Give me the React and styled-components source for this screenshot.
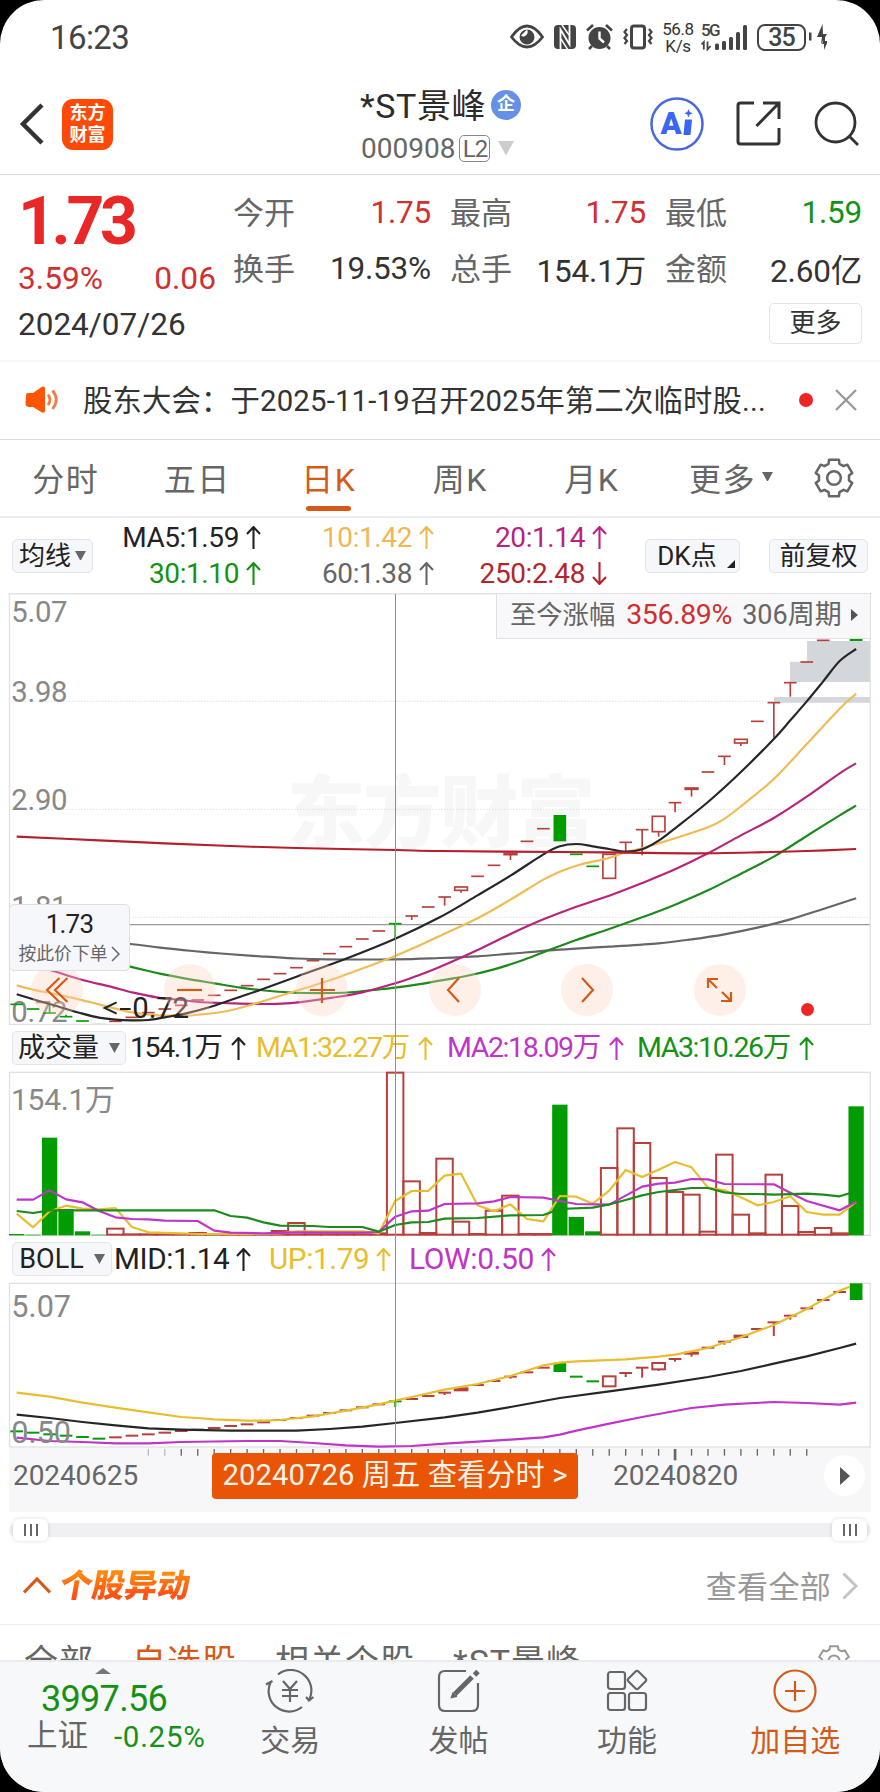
import React from "react";
import styled, { createGlobalStyle } from "styled-components";

const RED = "#d0302f";
const GREEN = "#159215";
const ORANGE = "#d65a17";
const CANDLE_RED = "#b8403c";
const CANDLE_GREEN = "#009c00";

// charts use 3 units for one pixel, a day is 49.38 units wide
const dayX = (i) => 50 + i * 49.38;

const kline = [
  { c: "g", y: 1243 }, { c: "g", y: 1257 }, { c: "g", y: 1269, from: 1245 }, { c: "g", y: 1280, from: 1274 },
  { c: "g", y: 1293 }, { c: "g", y: 1304 }, { y: 1294 }, { y: 1282 }, { y: 1268 }, { y: 1257 }, { y: 1246 },
  { y: 1230 }, { y: 1216 }, { y: 1201 }, { y: 1187 }, { y: 1168 }, { y: 1151 }, { y: 1133 }, { y: 1112 },
  { y: 1091 }, { y: 1070 }, { y: 1047 }, { y: 1023 }, { c: "g", y: 1001, to: 1045 }, { y: 978, to: 990 },
  { y: 951 }, { y: 921, to: 947 }, { y: 891, box: 901, to: 908 }, { y: 859 }, { y: 826 },
  { y: 790, box: 794, to: 810 }, { y: 754 }, { y: 716 }, { c: "g", y: 675, box: 754 }, { c: "g", y: 793 },
  { c: "g", y: 829 }, { y: 793, box: 865 }, { y: 757, to: 790 }, { y: 719, to: 796 },
  { y: 679, box: 725, to: 740 }, { y: 638, to: 667 }, { y: 594, box: 598, to: 620 }, { y: 546 },
  { y: 499, to: 525 }, { y: 448, box: 459, to: 468 }, { y: 394 }, { y: 338, to: 443 }, { y: 278, to: 320 },
  { y: 216 }, { y: 151 }, null, { c: "g", y: 145, box: 153 },
];

const klineLines = [
  { color: "#666", pts: [[0, 1025], [3, 1045], [6.9, 1062], [8.7, 1073], [10.7, 1083], [12.8, 1092], [14.8, 1099], [16.8, 1105], [18.8, 1108], [23, 1108], [25.7, 1104], [28, 1099], [30, 1091], [33, 1079], [36, 1070], [39, 1060], [41, 1048], [43, 1033], [45, 1013], [47, 988], [49, 957], [51, 925]] },
  { color: "#1c8a1c", pts: [[0, 1040], [3, 1085], [6.9, 1130], [8.7, 1151], [10.3, 1166], [12, 1180], [13.6, 1193], [14.8, 1200], [16.2, 1206], [17.6, 1209], [19.2, 1209], [20.5, 1206], [21.9, 1199], [23, 1193], [24.3, 1184], [25.7, 1172], [27.3, 1158], [29, 1138], [30.6, 1113], [32.2, 1083], [34, 1050], [36, 1017], [38, 982], [40, 944], [42, 901], [44, 851], [46, 800], [48, 738], [50, 676], [51, 647]] },
  { color: "#b8237c", pts: [[0, 1100], [2.3, 1144], [4, 1170], [5.7, 1190], [7.1, 1208], [8.5, 1222], [10, 1230], [11.1, 1236], [13.2, 1240], [15.2, 1242], [16.4, 1240], [17.6, 1234], [19.2, 1223], [21, 1207], [23, 1180], [24.3, 1158], [25.7, 1131], [28, 1080], [30, 1032], [32, 988], [34, 950], [36, 917], [38, 879], [40, 838], [42, 790], [44, 736], [46, 684], [48, 620], [50, 550], [51, 520]] },
  { color: "#f0bb52", pts: [[0, 1186], [1, 1199], [3, 1219], [5, 1243], [6, 1256], [7, 1267], [8.1, 1274], [9.1, 1277], [10.3, 1277], [11.5, 1272], [12.8, 1263], [14, 1248], [15.2, 1230], [16.4, 1211], [17.8, 1190], [19.2, 1168], [21.3, 1130], [23, 1098], [24.3, 1070], [25.7, 1038], [28, 985], [30, 929], [32, 869], [33, 845], [34, 827], [35, 815], [36, 804], [37, 787], [38, 775], [39, 760], [40, 745], [42, 712], [43, 686], [44, 649], [46, 567], [48, 462], [50, 356], [51, 311]] },
  { color: "#262626", pts: [[0, 1213], [2, 1242], [4, 1271], [5, 1283], [6, 1289], [7, 1291], [8, 1290], [9, 1282], [10.3, 1270], [12, 1247], [13.6, 1220], [15, 1196], [17, 1160], [20, 1106], [23, 1046], [25.7, 982], [28, 916], [30, 857], [32, 793], [33, 769], [34, 762], [35, 769], [36, 777], [37, 785], [38, 778], [39, 752], [40, 715], [42, 636], [44, 546], [46, 447], [47, 391], [48, 334], [49, 274], [50, 213], [51, 177]] },
  { color: "#b41f2b", pts: [[0, 740], [5, 751], [9, 760], [13, 768], [17, 774], [23, 780], [25.7, 783], [33, 786], [37, 788], [41, 790], [45, 787], [48, 783], [51, 777]] },
];

const volume = [
  642, 644, 353, 567, 634, 644, 626, 643, 643, 643, 643, 639, 643, 643, 643, 643, 633, 609, 643, 643, 643, 643, 640,
  158, 484, 639, 416, 605, 642, 572, 527, 642, 642, 254, 591, 634, 444, 325, 369, 474, 516, 524, 635, 404, 584, 640,
  464, 558, 636, 624, 640, 259,
];
const fallingDays = [0, 1, 2, 3, 4, 5, 33, 34, 35, 51];

const volumeLines = [
  { color: "#e8bd2e", pts: [[0, 581], [1, 622], [2, 574], [3, 557], [4, 566], [5, 568], [6, 564], [7, 621], [8, 637], [10, 640], [11, 642], [15, 642], [16, 640], [17, 634], [21, 634], [22, 640], [23, 543], [24, 513], [25, 513], [26, 467], [27, 461], [28, 556], [29, 574], [30, 553], [31, 597], [32, 604], [33, 528], [34, 530], [35, 551], [36, 512], [37, 450], [38, 471], [39, 449], [40, 426], [41, 442], [42, 503], [43, 511], [44, 532], [45, 556], [46, 546], [47, 529], [48, 576], [49, 584], [50, 584], [51, 546]] },
  { color: "#c034c8", pts: [[0, 539], [1, 539], [2, 511], [3, 538], [4, 547], [5, 573], [6, 592], [7, 597], [8, 598], [9, 602], [11, 603], [12, 632], [13, 638], [15, 640], [17, 637], [21, 638], [22, 636], [23, 590], [24, 574], [25, 572], [26, 552], [28, 550], [29, 544], [30, 531], [32, 533], [33, 543], [34, 552], [36, 554], [37, 527], [38, 500], [39, 491], [40, 488], [41, 477], [42, 478], [43, 492], [46, 493], [47, 518], [48, 543], [50, 571], [51, 545]] },
  { color: "#1c8a1c", pts: [[0, 573], [1, 579], [2, 571], [12, 571], [13, 588], [14, 593], [15, 607], [16, 617], [18, 618], [19, 621], [21, 621], [22, 635], [23, 615], [24, 607], [25, 606], [26, 596], [28, 594], [30, 586], [32, 585], [33, 567], [35, 563], [36, 553], [37, 540], [38, 526], [39, 516], [40, 510], [41, 504], [42, 504], [43, 517], [44, 522], [45, 522], [46, 524], [48, 521], [49, 524], [50, 529], [51, 514]] },
];

const boll = [
  { c: "g", y: 514 }, { c: "g", y: 518 }, { c: "g", y: 523 }, { c: "g", y: 527 }, { c: "g", y: 531 },
  { c: "g", y: 536 }, { y: 532 }, { y: 527 }, { y: 523 }, { y: 518 }, { y: 513 }, { y: 509 }, { y: 504 },
  { y: 498 }, { y: 493 }, { y: 487 }, { y: 480 }, { y: 474 }, { y: 467 }, { y: 459 }, { y: 451 }, { y: 442 },
  { y: 433 }, { c: "g", y: 424, to: 441 }, { y: 417 }, { y: 408 }, { y: 398, to: 405 }, { y: 385, box: 391 },
  { y: 375 }, { y: 363 }, { y: 350, to: 356 }, { y: 337 }, { y: 323 }, { c: "g", y: 308, box: 336 },
  { c: "g", y: 350 }, { c: "g", y: 364 }, { y: 349, box: 379 }, { y: 339, to: 351 }, { y: 323, to: 353 },
  { y: 309, box: 328, to: 333 }, { y: 297, to: 305 }, { y: 278, box: 281, to: 290 }, { y: 263 },
  { y: 245, to: 254 }, { y: 227, box: 231 }, { y: 207 }, { y: 187, to: 228 }, { y: 167, to: 179 }, { y: 145 },
  { y: 120 }, { y: 96 }, { c: "g", y: 70, box: 120 },
];

const bollLines = [
  { color: "#c034c8", pts: [[0, 533], [2, 543], [4, 546], [6, 550], [8, 550], [10, 546], [14, 543], [16, 543], [18, 549], [20, 556], [22, 560], [24, 558], [26, 551], [28, 545], [30, 539], [32, 532], [33, 524], [34, 512], [36, 491], [38, 471], [40, 453], [41, 444], [43, 434], [46, 426], [48, 429], [50, 434], [51, 428]] },
  { color: "#262626", pts: [[0, 464], [2, 474], [4, 486], [6, 496], [8, 505], [10, 509], [13, 512], [17, 512], [19, 507], [21, 500], [23, 489], [26, 472], [28, 458], [30, 441], [33, 414], [36, 394], [39, 374], [42, 351], [44, 333], [46, 311], [48, 289], [50, 264], [51, 251]] },
  { color: "#e8bd2e", pts: [[0, 398], [2, 410], [4, 428], [6, 443], [8, 457], [10, 471], [11, 474], [12, 478], [14, 482], [15, 482], [16, 480], [18, 469], [20, 452], [22, 433], [23, 422], [24, 411], [26, 389], [28, 372], [30, 348], [32, 316], [33, 308], [34, 304], [37, 298], [39, 290], [40, 284], [42, 264], [44, 232], [46, 195], [48, 147], [50, 92], [50.6, 80]] },
];

const smooth = (pts) => {
  const p = pts.map(([i, y]) => [dayX(i), y]);
  return p.reduce((d, [x, y], i) => {
    if (i === 0) return `M${x} ${y}`;
    const a = p[i - 2] || p[i - 1];
    const b = p[i - 1];
    const n = p[i + 1] || p[i];
    return `${d}C${b[0] + (x - a[0]) / 6} ${b[1] + (y - a[1]) / 6} ${x - (n[0] - b[0]) / 6} ${y - (n[1] - b[1]) / 6} ${x} ${y}`;
  }, "");
};

const straight = (pts) => pts.map(([i, y], n) => `${n ? "L" : "M"}${dayX(i)} ${y}`).join("");

const Lines = ({ lines, path }) =>
  lines.map(({ color, pts }) => (
    <path key={color} d={path(pts)} fill="none" stroke={color} strokeWidth="6.5" strokeLinejoin="round" />
  ));

const Candles = ({ data, width = 5 }) =>
  data.map((d, i) => {
    if (!d) return null;
    const x = dayX(i);
    const color = d.c === "g" ? CANDLE_GREEN : CANDLE_RED;
    return (
      <g key={i} stroke={color} strokeWidth={width} fill="none">
        {d.box ? (
          <rect
            x={x - 19}
            y={d.y}
            width="38"
            height={d.box - d.y}
            fill={d.c === "g" ? color : "none"}
            strokeWidth={d.c === "g" ? 0 : width}
          />
        ) : (
          <path d={`M${x - 19} ${d.y}h38`} />
        )}
        {d.to && <path d={`M${x} ${d.box || d.y}V${d.to}`} />}
        {d.from && <path d={`M${x} ${d.from}V${d.y}`} />}
      </g>
    );
  });

const KlineChart = () => (
  <ChartSvg $h={432} viewBox="0 9 2640 1296">
    <text x="860" y="752" textLength="925" fontSize="235" fontWeight="900" fill="#f7f7f7">东方财富</text>
    <g stroke="#d2d2d2" strokeWidth="3" strokeDasharray="3 6">
      <path d="M28 334H2611M28 658H2611M28 982H2611" />
    </g>
    <g fill="#d3d6db">
      <path d="M2322 321H2611V338H2322ZM2370 215H2611V276H2370ZM2421 153H2611V216H2421Z" />
    </g>
    <g fill="#888" fontSize="88" letterSpacing="-1">
      <text x="34" y="96">5.07</text>
      <text x="34" y="336">3.98</text>
      <text x="34" y="659">2.90</text>
      <text x="34" y="982">1.81</text>
      <text x="34" y="1297">0.72</text>
    </g>
    <path d="M28 1004H2611" stroke="#999" strokeWidth="4" />
    <Candles data={kline} />
    <Lines lines={klineLines} path={smooth} />
    <path d="M350 1237l-36 17l36 17M360 1257h32" fill="none" stroke="#222" strokeWidth="6" />
    <text x="397" y="1284" fontSize="88" fill="#222" textLength="170">0.72</text>
    <rect x="28.500" y="11.500" width="2582" height="1292" fill="none" stroke="#e0e0e0" strokeWidth="4" />
  </ChartSvg>
);

const VolumeChart = () => (
  <ChartSvg $h={166} viewBox="0 153 2640 498">
    <rect x="28.500" y="157" width="2582" height="489" fill="none" stroke="#e0e0e0" strokeWidth="4" />
    <text x="33" y="269" fontSize="90" fill="#888" textLength="312">154.1万</text>
    {volume.map((y, i) =>
      fallingDays.includes(i) ? (
        <rect key={i} x={dayX(i) - 23} y={y} width="46" height={646 - y} fill={CANDLE_GREEN} />
      ) : (
        <rect key={i} x={dayX(i) - 25} y={y} width="49.400" height={644 - y} fill="none" stroke={CANDLE_RED} strokeWidth="6" />
      )
    )}
    <Lines lines={volumeLines} path={straight} />
  </ChartSvg>
);

const BollChart = () => (
  <ChartSvg $h={167} viewBox="0 63 2640 501">
    <rect x="28.500" y="70" width="2582" height="491" fill="none" stroke="#e0e0e0" strokeWidth="4" />
    <Candles data={boll} width={6} />
    <Lines lines={bollLines} path={straight} />
    <g fill="#888" fontSize="92">
      <text x="34" y="170">5.07</text>
      <text x="34" y="550">0.50</text>
    </g>
  </ChartSvg>
);

const Ticks = () => (
  <TickSvg viewBox="0 564 2640 192">
    {Array.from({ length: 41 }, (_, n) => n + 8).map((i) => (
      <path
        key={i}
        d={`M${dayX(i)} 567v${i === 40 ? 34 : 20}`}
        stroke={i < 10 ? "#bbb" : "#666"}
        strokeWidth={i === 40 ? 8 : 4}
      />
    ))}
  </TickSvg>
);

const Arrow = ({ down }) => (
  <svg width="15" height="23" viewBox="0 0 15 23" fill="none" stroke="currentColor" strokeWidth="2.1">
    <path d={down ? "M7.500 0V22M1 15l6.500 7L14 15" : "M7.500 23V1M1 8L7.500 1L14 8"} />
  </svg>
);

const Triangle = ({ size = 11, color = "#666" }) => (
  <svg width={size} height={size * 0.9} viewBox="0 0 10 9">
    <path d="M0 0h10L5 9Z" fill={color} />
  </svg>
);

const gearPath = Array.from({ length: 6 }, (_, k) =>
  [[-15, 18], [15, 18], [21, 14.5], [39, 14.5]].map(([a, r]) => {
    const t = ((k * 60 + a - 90) * Math.PI) / 180;
    return `${(20 + r * Math.cos(t)).toFixed(1)} ${(20 + r * Math.sin(t)).toFixed(1)}`;
  })
)
  .flat()
  .join("L");

const Gear = ({ size, color, width = 2.4 }) => (
  <svg width={size} height={size} viewBox="0 0 40 40" fill="none" stroke={color} strokeWidth={width} strokeLinejoin="round">
    <path d={`M${gearPath}Z`} />
    <circle cx="20" cy="20" r="6.500" />
  </svg>
);

const StatusIcons = () => (
  <>
    <svg width="34" height="26" viewBox="0 0 34 26">
      <path d="M1.500 13Q9 2 17 2T32.500 13Q25 23 17 23T1.500 13Z" fill="none" stroke="#444" strokeWidth="2.800" />
      <path d="M17 5.500a7.500 7.500 0 1 0 7.500 7.500a7.500 7.500 0 0 0-7.500-7.500c1.500 3 .500 5-2 6.500c-1.500 1-3 .500-4-.500" fill="#444" />
    </svg>
    <svg width="24" height="26" viewBox="0 0 24 26">
      <rect x="1" y="1" width="22" height="24" rx="4" fill="#444" />
      <path d="M7.500 26V5.500L16.500 20.500V0" fill="none" stroke="#fff" strokeWidth="1.800" />
      <path d="M9 1L16 11M8 15L15 26" fill="none" stroke="#fff" strokeWidth="1.400" />
    </svg>
    <svg width="27" height="26" viewBox="0 0 27 26">
      <circle cx="13.500" cy="14" r="11" fill="#444" />
      <path d="M1 6.500L7 1M26 6.500L20 1M6 22l-3 3M21 22l3 3" stroke="#444" strokeWidth="2.600" />
      <path d="M13.500 7.500V14.500L18 18.500" fill="none" stroke="#fff" strokeWidth="2.400" />
    </svg>
    <svg width="32" height="26" viewBox="0 0 32 26" fill="none" stroke="#444">
      <rect x="9.500" y="2" width="13" height="22" rx="2.500" strokeWidth="3" />
      <path d="M5 5L2.500 8L5 11L2.500 14L5 17L2.500 20M27 5L29.500 8L27 11L29.500 14L27 17L29.500 20" strokeWidth="2.200" />
    </svg>
  </>
);

const Signal = () => (
  <svg width="47" height="28" viewBox="0 0 47 28" fill="#444">
    <path d="M2.800 26.500V19L.500 21.500M6.500 18.500V26.500L9.500 23" stroke="#444" strokeWidth="1.800" fill="none" />
    <rect x="14" y="20.500" width="4" height="6.500" rx="1.500" />
    <rect x="21" y="18" width="4" height="9" rx="1.500" />
    <rect x="28" y="14" width="4" height="13" rx="1.500" />
    <rect x="35" y="9" width="4" height="18" rx="1.500" />
    <rect x="42" y="2" width="4" height="25" rx="1.500" />
  </svg>
);

const quotes = [
  ["今开", "1.75", RED], ["最高", "1.75", RED], ["最低", "1.59", GREEN],
  ["换手", "19.53%"], ["总手", "154.1万"], ["金额", "2.60亿"],
];

const averages = [
  ["MA5:1.59", "#222"], ["10:1.42", "#f0b755"], ["20:1.14", "#b9227f"],
  ["30:1.10", GREEN], ["60:1.38", "#666"], ["250:2.48", "#b3252c", true],
];

const tools = [
  <path key="a" d="M15.500 1L3 13l12.500 12M23.500 1L11 13l12.500 12" />,
  <path key="b" d="M1 13h25" />,
  <path key="c" d="M13 1v25M1 13h25" />,
  <path key="d" d="M18 1L7 13l11 12" />,
  <path key="e" d="M8 1L19 13L8 25" />,
  <path key="f" d="M2 11V2H12M2 2L11 11M25 15V24H15M25 24L16 15" />,
];

const App = () => (
  <>
    <GlobalStyle />
    <Screen>
      <StatusBar>
        <Clock>16:23</Clock>
        <StatusIcons />
        <Speed><span>56.8</span><span>K/s</span></Speed>
        <SignalBox><i>5G</i><Signal /></SignalBox>
        <Battery>35</Battery>
        <svg width="18" height="28" viewBox="0 0 18 28" fill="#444">
          <path d="M0 9.500h2.500v8H0ZM13.500 1L8 14h5l-1 7L18 11h-4ZM16 13l-3 8h2l0 6l4-9h-3Z" />
        </svg>
      </StatusBar>

      <Header>
        <svg width="26" height="44" viewBox="0 0 26 44" fill="none" stroke="#333" strokeWidth="4.500">
          <path d="M23 3L4 22L23 41" />
        </svg>
        <Logo>东方<br />财富</Logo>
        <Title>
          <TitleRow><Name>*ST景峰</Name><Badge>企</Badge></TitleRow>
          <CodeRow>000908<Level>L2</Level><Triangle size={16} color="#ccc" /></CodeRow>
        </Title>
        <svg width="54" height="54" viewBox="0 0 54 54">
          <circle cx="27" cy="27" r="25.500" fill="none" stroke="#4668e0" strokeWidth="2.500" />
          <text x="10.500" y="37" fontSize="31" fontWeight="900" fill="#3a66f5">A</text>
          <path d="M35 22.500h7L40.500 38h-7ZM38.500 12l1.200 3l3 1.200l-3 1.200l-1.200 3l-1.200-3l-3-1.200l3-1.200Z" fill="#3a66f5" />
        </svg>
        <svg width="46" height="46" viewBox="0 0 46 46" fill="none" stroke="#333" strokeWidth="3">
          <path d="M18 2H4.500Q2 2 2 4.500V40.500Q2 43 4.500 43H40.500Q43 43 43 40.500V27M27 2H43V18M43 2L20.500 25" />
        </svg>
        <svg width="46" height="46" viewBox="0 0 46 46" fill="none" stroke="#333" strokeWidth="2.800">
          <circle cx="21.500" cy="21.500" r="19.500" />
          <path d="M35 35L44 44" />
        </svg>
      </Header>

      <Quote>
        <PriceBox>
          <Price>1.73</Price>
          <Change><span>3.59%</span><span>0.06</span></Change>
          <QuoteDate>2024/07/26</QuoteDate>
        </PriceBox>
        <QuoteSide>
          <QuoteGrid>
            {quotes.map(([label, value, color]) => (
              <QuoteCell key={label} $color={color}>
                <span>{label}</span>
                <b>{value}</b>
              </QuoteCell>
            ))}
          </QuoteGrid>
          <MoreButton>更多</MoreButton>
        </QuoteSide>
      </Quote>

      <Notice>
        <svg width="34" height="28" viewBox="0 0 34 28">
          <path d="M1 9Q1 7 3 7H8L17 .800Q19.500 0 20 2V25Q19.500 27.500 17 26.500L8 21H3Q.500 20 .500 18Z" fill="#ff5505" />
          <path d="M23 8.500Q27 13.500 23 19M27.500 4.500Q35 13.500 27.500 23" fill="none" stroke="#f37b45" strokeWidth="2.800" />
        </svg>
        <NoticeText>股东大会：于2025-11-19召开2025年第二次临时股...</NoticeText>
        <RedDot />
        <svg width="22" height="22" viewBox="0 0 22 22" stroke="#999" strokeWidth="2.400">
          <path d="M1 1L21 21M21 1L1 21" />
        </svg>
      </Notice>

      <Tabs>
        {["分时", "五日", "日K", "周K", "月K"].map((t) => (
          <Tab key={t} $active={t === "日K"}>{t}</Tab>
        ))}
        <Tab>更多<Triangle /></Tab>
        <Gear size={42} color="#666" />
      </Tabs>

      <ChartArea>
        <AverageBar>
          <Chip $w={81}>均线<Triangle size={11} /></Chip>
          <AverageGrid>
            {averages.map(([text, color, down]) => (
              <Legend key={text} $color={color} $size={28}>{text}<Arrow down={down} /></Legend>
            ))}
          </AverageGrid>
          <Chip $w={95} $corner>DK点</Chip>
          <Chip $w={99}>前复权</Chip>
        </AverageBar>

        <Plot>
          <KlineChart />
          <RiseTip>
            至今涨幅<em>356.89%</em><span>306周期</span>
            <svg width="7" height="12" viewBox="0 0 7 12"><path d="M0 0L7 6L0 12Z" fill="#555" /></svg>
          </RiseTip>
          <ToolRow>
            {tools.map((icon) => (
              <Tool key={icon.key}>
                <svg width="27" height="27" viewBox="0 0 27 27" fill="none" stroke={ORANGE} strokeWidth="2.200">{icon}</svg>
              </Tool>
            ))}
          </ToolRow>
          <OrderTip>
            <b>1.73</b>
            <span>
              按此价下单
              <svg width="9" height="16" viewBox="0 0 9 16" fill="none" stroke="#666" strokeWidth="1.500"><path d="M1 1L8 8L1 15" /></svg>
            </span>
          </OrderTip>
          <PlotDot />
        </Plot>

        <VolumeBar>
          <Chip $w={114} $gap={10} $size={27}>成交量<Triangle size={11} /></Chip>
          <Legend $color="#222" $tight>154.1万<Arrow /></Legend>
          <Legend $color="#e8bd2e" $tight>MA1:32.27万<Arrow /></Legend>
          <Legend $color="#c034c8" $tight>MA2:18.09万<Arrow /></Legend>
          <Legend $color={GREEN} $tight>MA3:10.26万<Arrow /></Legend>
        </VolumeBar>
        <VolumeChart />

        <BollBar>
          <Chip $w={100} $gap={10} $size={27}>BOLL<Triangle size={11} /></Chip>
          <Legend $color="#222" $size={29.7}>MID:1.14<Arrow /></Legend>
          <Legend $color="#e8bd2e" $size={29.7}>UP:1.79<Arrow /></Legend>
          <Legend $color="#c034c8" $size={30}>LOW:0.50<Arrow /></Legend>
        </BollBar>
        <BollChart />
        <Crosshair />
      </ChartArea>

      <Axis>
        <Ticks />
        <AxisDate>20240625</AxisDate>
        <DayButton>20240726 周五 查看分时 &gt;</DayButton>
        <AxisDate>20240820</AxisDate>
        <PlayButton>
          <svg width="10" height="18" viewBox="0 0 10 18"><path d="M0 0L10 9L0 18Z" fill="#555" /></svg>
        </PlayButton>
      </Axis>

      <Slider>
        <Handle><i /><i /><i /></Handle>
        <Handle><i /><i /><i /></Handle>
      </Slider>

      <SectionHead>
        <svg width="28" height="17" viewBox="0 0 28 17" fill="none" stroke={ORANGE} strokeWidth="3.200"><path d="M1 15.500L14 2L27 15.500" /></svg>
        <SectionTitle>个股异动</SectionTitle>
        <ViewAll>查看全部</ViewAll>
        <svg width="16" height="28" viewBox="0 0 16 28" fill="none" stroke="#c4c4c4" strokeWidth="3"><path d="M1.500 1.500L14 14L1.500 26.500" /></svg>
      </SectionHead>
      <NewsTabs>
        <span>全部</span>
        <NewsActive>自选股</NewsActive>
        <span>相关个股</span>
        <span>*ST景峰</span>
        <Gear size={34} color="#999" />
      </NewsTabs>

      <BottomBar>
        <IndexBox>
          <svg width="16" height="6" viewBox="0 0 16 6"><path d="M0 6L8 0L16 6Z" fill="#777" /></svg>
          <b>3997.56</b>
          <div><span>上证</span><em>-0.25%</em></div>
        </IndexBox>
        <BottomItem>
          <svg width="50" height="44" viewBox="0 0 50 44" fill="none" stroke="#666" strokeWidth="2.200">
            <path d="M13 5.500A20.500 20.500 0 0 1 44.500 30M41 28L44 31.500L48.500 28M37 38A20.500 20.500 0 0 1 5.500 13.500M1 15.500L7.500 12" />
            <path d="M18 12L25 20L32 12M25 20V33M17 21H33M17 27H33" />
          </svg>
          交易
        </BottomItem>
        <BottomItem>
          <svg width="44" height="44" viewBox="0 0 44 44" fill="none" stroke="#666" strokeWidth="2.200">
            <path d="M29 2H8Q2 2 2 8V36Q2 42 8 42H35Q41 42 41 36V14" />
            <path d="M35 8L18 25" strokeWidth="5" />
            <path d="M37.500 6L41 2.500" strokeWidth="5" />
            <path d="M20 27L15 28L16.500 23.500" fill="#666" />
          </svg>
          发帖
        </BottomItem>
        <BottomItem>
          <svg width="42" height="44" viewBox="0 0 42 44" fill="none" stroke="#666" strokeWidth="2.200">
            <rect x="2" y="3" width="17" height="17" rx="2.500" />
            <rect x="2" y="24" width="17" height="17" rx="2.500" />
            <rect x="23" y="24" width="17" height="17" rx="2.500" />
            <rect x="24" y="4" width="14" height="14" rx="2" transform="rotate(45 31 11)" />
          </svg>
          功能
        </BottomItem>
        <BottomItem $active>
          <svg width="44" height="44" viewBox="0 0 44 44" fill="none" stroke={ORANGE} strokeWidth="2.200">
            <circle cx="22" cy="22" r="20.500" />
            <path d="M22 12V32M12 22H32" />
          </svg>
          加自选
        </BottomItem>
      </BottomBar>
    </Screen>
  </>
);

const GlobalStyle = createGlobalStyle`
  * {
    box-sizing: border-box;
  }
  body {
    margin: 0;
    background: #000;
    font-family: Roboto, "Noto Sans CJK SC", sans-serif;
  }
  svg {
    display: block;
    flex-shrink: 0;
  }
  i, em {
    font-style: normal;
  }
  b {
    font-weight: 400;
  }
`;

const Screen = styled.div`
  width: 880px;
  height: 1792px;
  display: flex;
  flex-direction: column;
  background: #fff;
  border-radius: 44px;
  overflow: hidden;
  white-space: nowrap;
  & > * {
    flex-shrink: 0;
  }
`;

const StatusBar = styled.div`
  height: 74px;
  padding-left: 50px;
  display: flex;
  align-items: center;
  gap: 9px;
`;

const Clock = styled.div`
  width: 451px;
  font-size: 33px;
  letter-spacing: -0.6px;
  color: #444;
`;

const Speed = styled.div`
  width: 32px;
  margin-left: -1px;
  padding-top: 1px;
  display: flex;
  flex-direction: column;
  align-items: center;
  font-size: 17px;
  line-height: 16.5px;
  letter-spacing: -0.4px;
  color: #333;
`;

const SignalBox = styled.div`
  position: relative;
  margin-left: -2px;
  i {
    position: absolute;
    left: 0;
    top: -2px;
    font-size: 17px;
    line-height: 18px;
    font-weight: 500;
    letter-spacing: -1.6px;
    color: #444;
  }
`;

const Battery = styled.div`
  width: 49px;
  height: 27px;
  border: 2px solid #444;
  border-radius: 8px;
  text-align: center;
  font-size: 25px;
  line-height: 24px;
  letter-spacing: -1px;
  font-weight: 500;
  color: #444;
  & + svg {
    margin-left: -6px;
  }
`;

const Header = styled.div`
  height: 101px;
  padding-left: 19px;
  display: flex;
  align-items: center;
  border-bottom: 1px solid #dcdedd;
  & > svg:nth-of-type(2) {
    margin-left: 109px;
  }
  & > svg:nth-of-type(3) {
    margin-left: 32px;
  }
  & > svg:nth-of-type(4) {
    margin-left: 32px;
  }
`;

const Logo = styled.div`
  width: 51px;
  height: 51px;
  margin-left: 17px;
  padding-top: 3px;
  border-radius: 11px;
  background: #ff4a05;
  color: #fff;
  text-align: center;
  font-size: 18px;
  line-height: 22px;
  font-weight: 700;
`;

const Title = styled.div`
  width: 180px;
  margin-left: 248px;
  padding-top: 6px;
`;

const TitleRow = styled.div`
  height: 40px;
  display: flex;
  align-items: center;
  gap: 6px;
`;

const Name = styled.div`
  width: 125px;
  font-size: 34px;
  letter-spacing: 0.6px;
  margin: -3px 0 0 -1px;
  color: #2b2b2b;
`;

const Badge = styled.div`
  width: 30px;
  height: 30px;
  border-radius: 50%;
  background: #6590e5;
  color: #fff;
  font-size: 18px;
  line-height: 28px;
  font-weight: 700;
  text-align: center;
`;

const CodeRow = styled.div`
  height: 42px;
  margin-top: 3px;
  display: flex;
  align-items: center;
  font-size: 28px;
  color: #666;
  svg {
    margin-left: 8px;
  }
`;

const Level = styled.div`
  width: 31px;
  height: 27px;
  margin-left: 4px;
  border: 1px solid #888;
  border-radius: 5px;
  font-size: 24px;
  line-height: 26px;
  letter-spacing: -1px;
  text-align: center;
`;

const Quote = styled.div`
  height: 187px;
  display: flex;
  border-bottom: 2px solid #f6f6f6;
`;

const PriceBox = styled.div`
  width: 216px;
  padding-left: 18px;
`;

const Price = styled.div`
  height: 81px;
  padding-top: 7px;
  font-size: 66px;
  line-height: 80px;
  font-weight: 700;
  letter-spacing: -4.3px;
  color: #ea2727;
`;

const Change = styled.div`
  display: flex;
  justify-content: space-between;
  font-size: 31.7px;
  line-height: 45px;
  color: ${RED};
`;

const QuoteDate = styled.div`
  font-size: 31.5px;
  line-height: 48px;
  color: #333;
`;

const QuoteSide = styled.div`
  margin-left: 17px;
  width: 629px;
`;

const QuoteGrid = styled.div`
  padding-top: 9px;
  display: grid;
  grid-template-columns: 198px 196px 197px;
  column-gap: 19px;
`;

const QuoteCell = styled.div`
  height: 56px;
  display: flex;
  justify-content: space-between;
  align-items: center;
  font-size: 31px;
  color: #666;
  span {
    padding-bottom: 3px;
  }
  b {
    font-size: 31.5px;
    letter-spacing: -0.2px;
    color: ${(p) => p.$color || "#333"};
  }
`;

const MoreButton = styled.div`
  width: 93px;
  height: 41px;
  margin: 7px 0 0 auto;
  border: 1px solid #e4e4e4;
  border-radius: 5px;
  text-align: center;
  font-size: 26px;
  line-height: 38px;
  color: #333;
`;

const Notice = styled.div`
  height: 78px;
  padding: 0 0 2px 25px;
  display: flex;
  align-items: center;
  border-bottom: 1px solid #dcdcdc;
`;

const NoticeText = styled.div`
  width: 741px;
  flex-shrink: 0;
  padding: 0 0 3px 24px;
  font-size: 29.3px;
  letter-spacing: 0.2px;
  color: #333;
`;

const RedDot = styled.div`
  width: 14px;
  height: 14px;
  margin: 0 22px 0 -1px;
  border-radius: 50%;
  background: #ef2525;
`;

const Tabs = styled.div`
  height: 78px;
  display: flex;
  align-items: center;
  border-bottom: 2px solid #ededed;
`;

const Tab = styled.div`
  width: 131.5px;
  height: 76px;
  padding-bottom: 3px;
  display: flex;
  justify-content: center;
  align-items: center;
  gap: 6px;
  position: relative;
  font-size: 32px;
  letter-spacing: 1.5px;
  color: ${(p) => (p.$active ? ORANGE : "#666")};
  &:nth-child(6) {
    width: 147px;
    margin-right: 8px;
  }
  &::after {
    content: "";
    display: ${(p) => (p.$active ? "block" : "none")};
    position: absolute;
    left: 43px;
    bottom: 5px;
    width: 45px;
    height: 5px;
    border-radius: 3px;
    background: ${ORANGE};
  }
`;

const ChartArea = styled.div`
  position: relative;
`;

const AverageBar = styled.div`
  height: 75px;
  padding-left: 12px;
  display: flex;
  align-items: center;
  & > div:nth-child(3) {
    margin-left: 38px;
  }
  & > div:nth-child(4) {
    margin-left: 29px;
  }
`;

const Chip = styled.div`
  width: ${(p) => p.$w}px;
  height: 34px;
  display: flex;
  justify-content: center;
  align-items: center;
  gap: ${(p) => p.$gap || 4}px;
  position: relative;
  flex-shrink: 0;
  border: 1px solid #e3e5e9;
  border-radius: 5px;
  background: #f6f7fa;
  font-size: ${(p) => p.$size || 26}px;
  line-height: 32px;
  color: #222;
  padding-right: ${(p) => (p.$corner ? 11 : 0)}px;
  &::after {
    content: "";
    display: ${(p) => (p.$corner ? "block" : "none")};
    position: absolute;
    right: 4px;
    bottom: 4px;
    border-style: solid;
    border-width: 0 0 8px 8px;
    border-color: transparent transparent #222 transparent;
  }
`;

const AverageGrid = styled.div`
  width: 514px;
  display: grid;
  grid-template-columns: 168px 173px 173px;
  justify-items: end;
`;

const Legend = styled.div`
  height: 36px;
  display: flex;
  align-items: center;
  gap: ${(p) => (p.$tight ? 9 : 7)}px;
  font-size: ${(p) => p.$size || 28.5}px;
  line-height: 34px;
  letter-spacing: ${(p) => (p.$tight ? -1.4 : -0.4)}px;
  color: ${(p) => p.$color};
`;

const Plot = styled.div`
  position: relative;
`;

const ChartSvg = styled.svg`
  width: 880px;
  height: ${(p) => p.$h}px;
`;

const RiseTip = styled.div`
  position: absolute;
  left: 496px;
  top: 0;
  width: 375px;
  height: 46px;
  padding: 0 0 2px 13px;
  display: flex;
  align-items: center;
  border: 1px solid #e0e0e3;
  background: #f8f8fa;
  font-size: 26.3px;
  line-height: 40px;
  color: #666;
  em {
    width: 127px;
    padding-left: 11px;
    font-size: 28.5px;
    letter-spacing: -0.4px;
    color: ${RED};
  }
  span {
    width: 109px;
    font-size: 27px;
  }
`;

const ToolRow = styled.div`
  position: absolute;
  left: 31px;
  top: 371px;
  display: flex;
  gap: 80.5px;
`;

const Tool = styled.div`
  width: 52px;
  height: 52px;
  display: flex;
  justify-content: center;
  align-items: center;
  border-radius: 50%;
  background: rgba(252, 212, 190, 0.35);
`;

const OrderTip = styled.div`
  position: absolute;
  left: 9px;
  top: 311px;
  width: 121px;
  height: 67px;
  display: flex;
  flex-direction: column;
  align-items: center;
  border: 1px solid #dcdee2;
  border-radius: 5px;
  background: #f6f7fa;
  color: #222;
  b {
    font-size: 26px;
    line-height: 39px;
    letter-spacing: -0.8px;
  }
  span {
    display: flex;
    align-items: center;
    gap: 4px;
    font-size: 17.8px;
    line-height: 20px;
    color: #666;
  }
`;

const PlotDot = styled.div`
  position: absolute;
  left: 801px;
  top: 410px;
  width: 13px;
  height: 13px;
  border-radius: 50%;
  background: #ef2525;
`;

const VolumeBar = styled.div`
  height: 46px;
  padding-left: 12px;
  display: grid;
  grid-template-columns: 118px 126px 191px 190px 190px;
  align-items: center;
`;

const BollBar = styled.div`
  height: 44px;
  padding-left: 12px;
  display: grid;
  grid-template-columns: 102px 155px 140px 160px;
  align-items: center;
`;

const Crosshair = styled.div`
  position: absolute;
  left: 395px;
  top: 76px;
  bottom: 1px;
  width: 1px;
  background: #8f8f8f;
`;

const Axis = styled.div`
  position: relative;
  height: 64px;
  margin: 0 9px;
  padding-bottom: 9px;
  display: flex;
  align-items: center;
  background: #f7f7fa;
`;

const TickSvg = styled.svg`
  position: absolute;
  left: -9px;
  top: 0;
  width: 880px;
  height: 64px;
`;

const AxisDate = styled.div`
  width: 200px;
  padding-left: 4px;
  font-size: 28px;
  letter-spacing: -0.1px;
  color: #666;
`;

const DayButton = styled.div`
  position: relative;
  width: 366px;
  height: 46px;
  margin: 1px 31px 0 3px;
  border-radius: 4px;
  background: #e95504;
  color: #fff4ea;
  text-align: center;
  font-size: 29.2px;
  letter-spacing: 0.1px;
  line-height: 45px;
`;

const PlayButton = styled.div`
  width: 41px;
  height: 41px;
  margin-left: 15px;
  padding-left: 1px;
  display: flex;
  justify-content: center;
  align-items: center;
  border-radius: 50%;
  background: #fff;
`;

const Slider = styled.div`
  height: 14px;
  margin: 11px 9px 0;
  padding: 0 4px;
  display: flex;
  justify-content: space-between;
  align-items: center;
  border-radius: 7px;
  background: #f0f0f2;
`;

const Handle = styled.div`
  width: 35px;
  height: 22px;
  display: flex;
  justify-content: center;
  align-items: center;
  gap: 4px;
  border-radius: 6px;
  background: #fff;
  box-shadow: 0 0 4px rgba(0, 0, 0, 0.15);
  i {
    width: 2px;
    height: 12px;
    background: #666;
  }
`;

const SectionHead = styled.div`
  height: 88px;
  padding: 10px 22px 0 23px;
  display: flex;
  align-items: center;
  border-bottom: 1px solid #ececec;
`;

const SectionTitle = styled.div`
  margin-left: 9px;
  font-size: 32.5px;
  line-height: 44px;
  font-weight: 900;
  transform: skewX(-10deg);
  background: linear-gradient(#ff8a10 20%, #ff5214 70%);
  background-clip: text;
  color: transparent;
`;

const ViewAll = styled.div`
  margin: 0 11px 3px auto;
  font-size: 31px;
  letter-spacing: 0.3px;
  color: #999;
`;

const NewsTabs = styled.div`
  height: 35px;
  padding: 17px 29px 0 24px;
  display: flex;
  align-items: flex-start;
  overflow: hidden;
  font-size: 34px;
  line-height: 40px;
  letter-spacing: 1px;
  color: #666;
  span {
    margin-right: 38px;
  }
  svg {
    margin: 2px 0 0 auto;
  }
`;

const NewsActive = styled.span`
  color: ${ORANGE};
`;

const BottomBar = styled.div`
  height: 132px;
  display: flex;
  border-top: 2px solid #e9ebee;
  background: #f7f8fa;
`;

const IndexBox = styled.div`
  width: 206px;
  padding: 6px 0 0 27px;
  color: ${GREEN};
  svg {
    margin-left: 68px;
  }
  b {
    display: block;
    padding: 2px 0 0 14px;
    font-size: 36px;
    line-height: 46px;
    letter-spacing: -0.7px;
  }
  div {
    display: flex;
    gap: 26px;
    font-size: 29.5px;
    line-height: 28px;
  }
  em {
    padding-top: 1px;
    letter-spacing: 0.7px;
  }
  span {
    font-size: 30.5px;
    color: #666;
  }
`;

const BottomItem = styled.div`
  width: 168.4px;
  padding-top: 7px;
  display: flex;
  flex-direction: column;
  align-items: center;
  font-size: 30px;
  line-height: 55px;
  color: ${(p) => (p.$active ? ORANGE : "#666")};
`;

export default App;
